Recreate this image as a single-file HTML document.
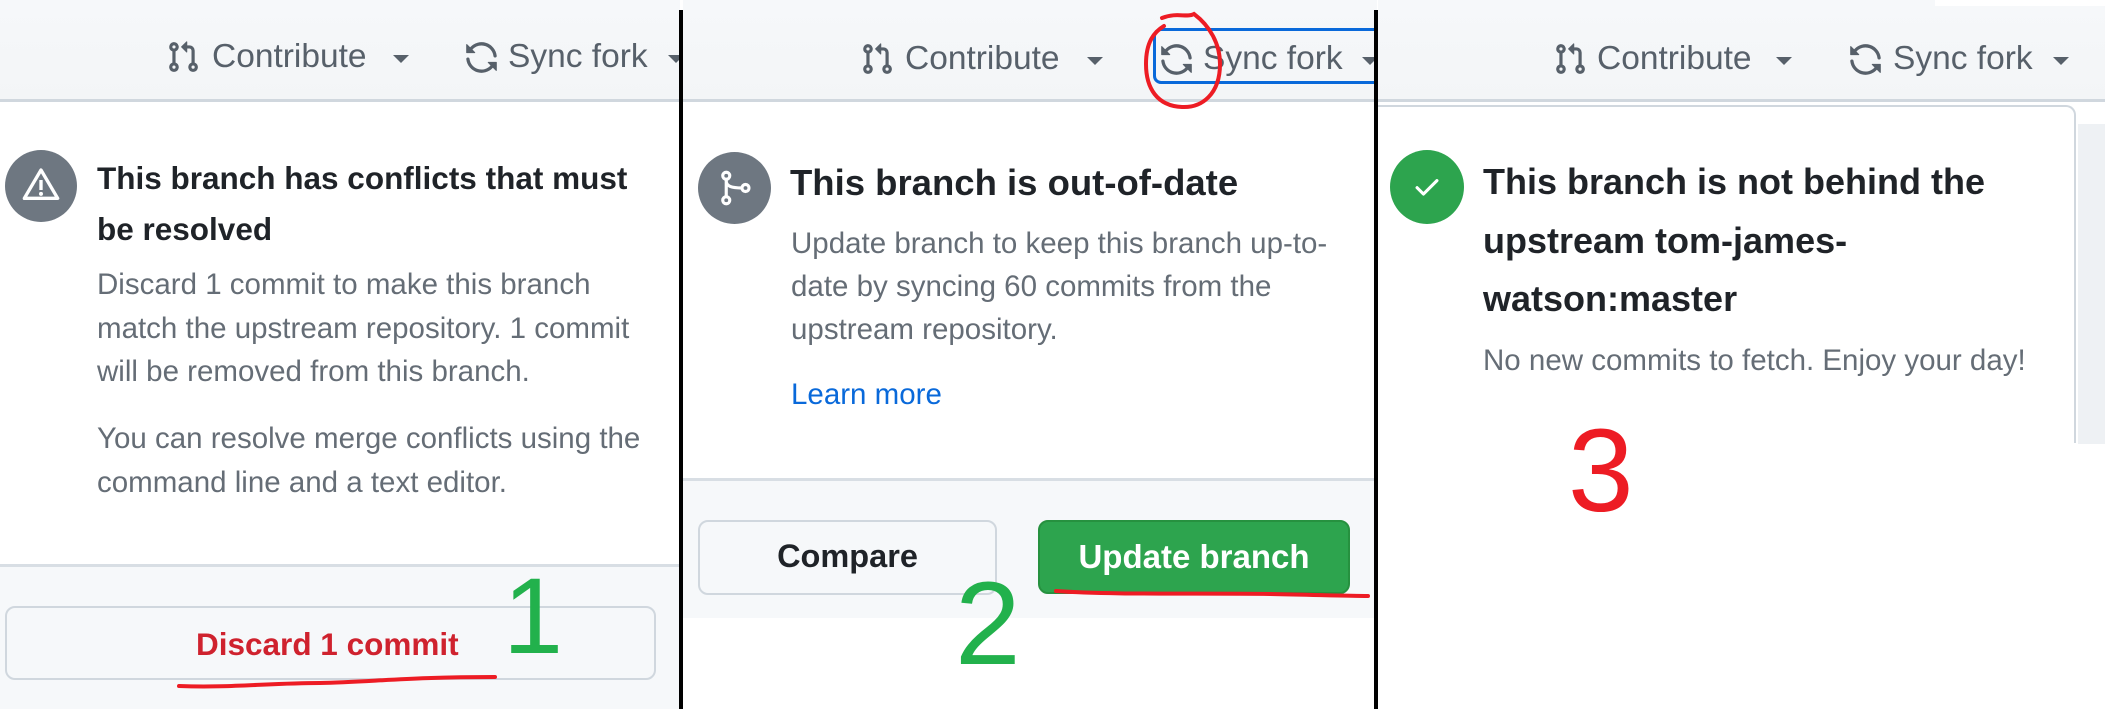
<!DOCTYPE html>
<html><head><meta charset="utf-8"><style>
*{margin:0;padding:0;box-sizing:border-box}
body{width:2105px;height:709px;overflow:hidden;background:#fff;font-family:"Liberation Sans",sans-serif;position:relative}
.a{position:absolute;white-space:nowrap}
.hdr{position:absolute;top:0;height:102px;background:linear-gradient(#f6f8fa,#f3f5f7);border-bottom:3px solid #d0d7de}
.ht{font-size:33.5px;color:#57606a;line-height:36px}
.ttl{font-size:31.5px;font-weight:bold;color:#1f2328}
.bd{font-size:29.5px;color:#656d76}
.circ{position:absolute;border-radius:50%;background:#6e7781}
.caret{position:absolute;width:0;height:0;border-left:8px solid transparent;border-right:8px solid transparent;border-top:8px solid #57606a}
.vl{position:absolute;top:10px;width:4px;height:699px;background:#000}
</style></head><body>
<svg width="0" height="0" style="position:absolute"><defs>
<symbol id="pr" viewBox="0 0 16 16"><path fill="#57606a" d="M1.5 3.25a2.25 2.25 0 1 1 3 2.122v5.256a2.251 2.251 0 1 1-1.5 0V5.372A2.25 2.25 0 0 1 1.5 3.25Zm5.677-.177L9.573.677A.25.25 0 0 1 10 .854V2.5h1A2.5 2.5 0 0 1 13.5 5v5.628a2.251 2.251 0 1 1-1.5 0V5a1 1 0 0 0-1-1h-1v1.646a.25.25 0 0 1-.427.177L7.177 3.427a.25.25 0 0 1 0-.354ZM3.75 2.5a.75.75 0 1 0 0 1.5.75.75 0 0 0 0-1.5Zm0 9.5a.75.75 0 1 0 0 1.5.75.75 0 0 0 0-1.5Zm8.25.75a.75.75 0 1 0 1.5 0 .75.75 0 0 0-1.5 0Z"/></symbol>
<symbol id="sy" viewBox="0 0 16 16"><path fill="#57606a" d="M1.705 8.005a.75.75 0 0 1 .834.656 5.5 5.5 0 0 0 9.592 2.97l-1.204-1.204a.25.25 0 0 1 .177-.427h3.646a.25.25 0 0 1 .25.25v3.646a.25.25 0 0 1-.427.177l-1.38-1.38A7.002 7.002 0 0 1 1.05 8.84a.75.75 0 0 1 .656-.834ZM8 2.5a5.487 5.487 0 0 0-4.131 1.869l1.204 1.204A.25.25 0 0 1 4.896 6H1.25A.25.25 0 0 1 1 5.75V2.104a.25.25 0 0 1 .427-.177l1.38 1.38A7.002 7.002 0 0 1 14.95 7.160a.75.75 0 0 1-1.490.178A5.5 5.5 0 0 0 8 2.5Z"/></symbol>
</defs></svg>

<!-- Panel 1 -->
<div class="hdr" style="left:0;width:680px"></div>
<svg class="a" style="left:166px;top:40px" width="34" height="34"><use href="#pr"/></svg>
<div class="a ht" style="left:212px;top:39px">Contribute</div>
<div class="caret" style="left:393px;top:55px"></div>
<svg class="a" style="left:464px;top:40px" width="35" height="35"><use href="#sy"/></svg>
<div class="a ht" style="left:508px;top:39px">Sync fork</div>
<div class="caret" style="left:668px;top:55px"></div>
<div class="circ" style="left:5px;top:150px;width:72px;height:72px"></div>
<svg class="a" style="left:20px;top:165px" width="42" height="40" viewBox="0 0 24 24"><path d="M12 3 L22 20 H2 Z" fill="none" stroke="#fff" stroke-width="2" stroke-linejoin="round"/><rect x="11" y="9" width="2" height="6" fill="#fff"/><circle cx="12" cy="17.3" r="1.2" fill="#fff"/></svg>
<div class="a ttl" style="left:97px;top:153px;line-height:51px">This branch has conflicts that must<br>be resolved</div>
<div class="a bd" style="left:97px;top:263px;line-height:43.5px">Discard 1 commit to make this branch<br>match the upstream repository. 1 commit<br>will be removed from this branch.</div>
<div class="a bd" style="left:97px;top:417px;line-height:44px">You can resolve merge conflicts using the<br>command line and a text editor.</div>
<div class="a" style="left:0;top:564px;width:680px;height:145px;background:#f6f8fa;border-top:3px solid #d8dee4"></div>
<div class="a" style="left:5px;top:606px;width:651px;height:74px;border:2px solid #d0d7de;border-radius:10px;background:#f6f8fa"></div>
<div class="a" style="left:196px;top:626px;font-size:31.5px;font-weight:bold;color:#cf222e">Discard 1 commit</div>
<svg class="a" style="left:170px;top:670px" width="340" height="25"><path d="M9 16 C60 18 100 13 150 13 C200 12 240 7 325 7" fill="none" stroke="#ed1c24" stroke-width="4" stroke-linecap="round"/></svg>
<div class="a" style="left:503px;top:562px;font-size:108px;color:#22b14c;line-height:108px">1</div>
<div class="vl" style="left:679px"></div>

<!-- Panel 2 -->
<div class="hdr" style="left:683px;width:694px"></div>
<svg class="a" style="left:860px;top:42px" width="34" height="34"><use href="#pr"/></svg>
<div class="a ht" style="left:905px;top:41px">Contribute</div>
<div class="caret" style="left:1087px;top:57px"></div>
<div class="a" style="left:1153px;top:28px;width:230px;height:56px;border:3px solid #0969da;border-radius:8px"></div>
<svg class="a" style="left:1159px;top:42px" width="35" height="35"><use href="#sy"/></svg>
<div class="a ht" style="left:1203px;top:41px">Sync fork</div>
<div class="caret" style="left:1362px;top:57px"></div>
<svg class="a" style="left:1132px;top:4px" width="95" height="110"><path d="M30 14 C45 8 55 14 62 10 C78 22 88 40 88 60 C88 90 70 104 50 103 C25 102 14 84 14 60 C14 38 22 28 32 22" fill="none" stroke="#ed1c24" stroke-width="4" stroke-linecap="round"/></svg>
<div class="circ" style="left:698px;top:152px;width:73px;height:72px"></div>
<svg class="a" style="left:714px;top:167px" width="42" height="42" viewBox="0 0 24 24"><g fill="none" stroke="#fff" stroke-width="1.8"><circle cx="7" cy="5" r="2"/><circle cx="7" cy="19" r="2"/><circle cx="18" cy="12" r="2"/><path d="M7 7v10M7 8c0 3 3 4 9 4"/></g></svg>
<div class="a ttl" style="left:790px;top:162px;line-height:42px;font-size:36.5px">This branch is out-of-date</div>
<div class="a bd" style="left:791px;top:222px;line-height:43px">Update branch to keep this branch up-to-<br>date by syncing 60 commits from the<br>upstream repository.</div>
<div class="a bd" style="left:791px;top:378px;color:#0969da">Learn more</div>
<div class="a" style="left:683px;top:478px;width:694px;height:140px;background:#f6f8fa;border-top:3px solid #d8dee4"></div>
<div class="a" style="left:698px;top:520px;width:299px;height:75px;border:2px solid #d0d7de;border-radius:10px;background:#f6f8fa"></div>
<div class="a" style="left:698px;top:538px;width:299px;text-align:center;font-size:32.5px;font-weight:bold;color:#1f2328">Compare</div>
<div class="a" style="left:1038px;top:520px;width:312px;height:74px;border:2px solid #26913f;border-radius:10px;background:#2da44e"></div>
<div class="a" style="left:1038px;top:538px;width:312px;text-align:center;font-size:33px;font-weight:bold;color:#fff">Update branch</div>
<svg class="a" style="left:1050px;top:585px" width="330" height="20"><path d="M6 6 C60 10 150 8 220 9 C270 10 300 11 318 11" fill="none" stroke="#ed1c24" stroke-width="4" stroke-linecap="round"/></svg>
<div class="a" style="left:955px;top:565px;font-size:118px;color:#22b14c;line-height:118px">2</div>
<div class="vl" style="left:1374px"></div>

<!-- Panel 3 -->
<div class="hdr" style="left:1378px;width:727px"></div>
<div class="a" style="left:1935px;top:0;width:170px;height:6px;background:#fff"></div>
<svg class="a" style="left:1553px;top:42px" width="34" height="34"><use href="#pr"/></svg>
<div class="a ht" style="left:1597px;top:41px">Contribute</div>
<div class="caret" style="left:1776px;top:57px"></div>
<svg class="a" style="left:1848px;top:42px" width="35" height="35"><use href="#sy"/></svg>
<div class="a ht" style="left:1893px;top:41px">Sync fork</div>
<div class="caret" style="left:2053px;top:57px"></div>
<div class="a" style="left:2078px;top:124px;width:27px;height:320px;background:#eef1f4"></div>
<div class="a" style="left:1378px;top:105px;width:698px;height:338px;background:#fff;border-right:2px solid #d0d7de;border-top:2px solid #d0d7de;border-top-right-radius:10px"></div>
<div class="a" style="left:1390px;top:150px;width:74px;height:74px;border-radius:50%;background:#2da44e"></div>
<svg class="a" style="left:1410px;top:170px" width="34" height="34" viewBox="0 0 24 24"><path d="M5 12.5l4.5 4.5L19 7.5" fill="none" stroke="#fff" stroke-width="2.2" stroke-linecap="round" stroke-linejoin="round"/></svg>
<div class="a ttl" style="left:1483px;top:153px;line-height:58.5px;font-size:36px">This branch is not behind the<br>upstream tom-james-<br>watson:master</div>
<div class="a bd" style="left:1483px;top:344px;font-size:29.5px">No new commits to fetch. Enjoy your day!</div>
<div class="a" style="left:1568px;top:412px;font-size:118px;color:#ed1c24;line-height:118px">3</div>
</body></html>
